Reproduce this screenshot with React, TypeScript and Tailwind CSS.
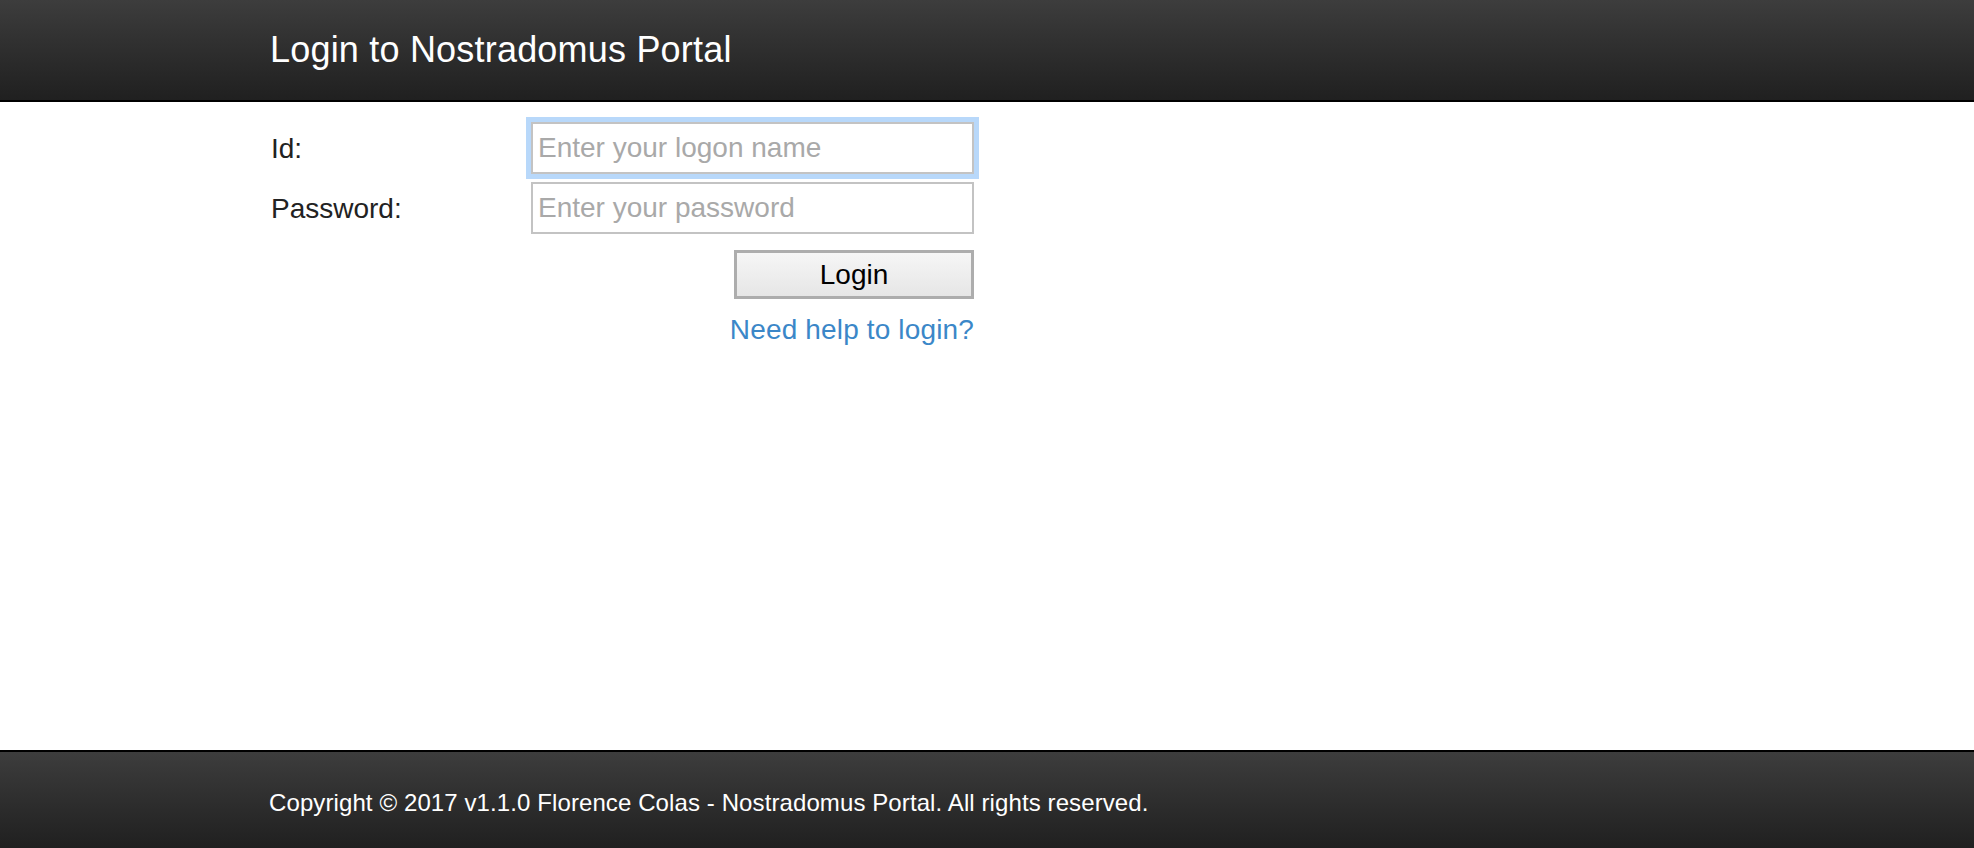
export default function App() {
  return (
    <div className="flex h-[848px] flex-col bg-white font-['Liberation_Sans',Arial,sans-serif]">
      {/* header */}
      <header className="h-[102px] border-b-2 border-black bg-gradient-to-b from-[#3d3d3d] to-[#202020]">
        <h1 className="pl-[270px] text-[36px] leading-[100px] tracking-[0.2px] text-white">Login to Nostradomus Portal</h1>
      </header>

      {/* login form */}
      <main className="flex-1 pl-[271px] pt-[20px]">
        <form className="w-[703px]" onSubmit={(e) => e.preventDefault()}>
          <div className="grid grid-cols-[260px_443px] gap-y-[8px]">
            <label htmlFor="id" className="flex items-center pt-[2px] text-[28px] text-[#222]">
              Id:
            </label>
            <input
              id="id"
              type="text"
              placeholder="Enter your logon name"
              className="h-[52px] rounded-none border-2 border-[#c3c3c3] px-[5px] text-[28px] text-black outline-none ring-[5px] ring-[#b8d8fa] placeholder:text-[#a9a9a9]"
            />
            <label htmlFor="password" className="flex items-center pt-[2px] text-[28px] text-[#222]">
              Password:
            </label>
            <input
              id="password"
              type="password"
              placeholder="Enter your password"
              className="h-[52px] rounded-none border-2 border-[#c3c3c3] px-[5px] text-[28px] text-black outline-none placeholder:text-[#a9a9a9]"
            />
          </div>

          <div className="mt-[16px] flex flex-col items-end">
            <button
              type="submit"
              className="h-[49px] w-[240px] border-[3px] border-[#adadad] bg-gradient-to-b from-[#f6f6f6] to-[#e6e6e6] text-[28px] leading-none text-black"
            >
              Login
            </button>
            <a href="#" className="mt-[15px] text-[28px] leading-[32px] tracking-[0.15px] text-[#3b87c8]">
              Need help to login?
            </a>
          </div>
        </form>
      </main>

      {/* footer */}
      <footer className="h-[98px] border-t-2 border-black bg-gradient-to-b from-[#3d3d3d] to-[#202020]">
        <p className="pl-[269px] pt-[3px] text-[24px] leading-[96px] tracking-[0.1px] text-white">
          Copyright © 2017 v1.1.0 Florence Colas - Nostradomus Portal. All rights reserved.
        </p>
      </footer>
    </div>
  );
}
